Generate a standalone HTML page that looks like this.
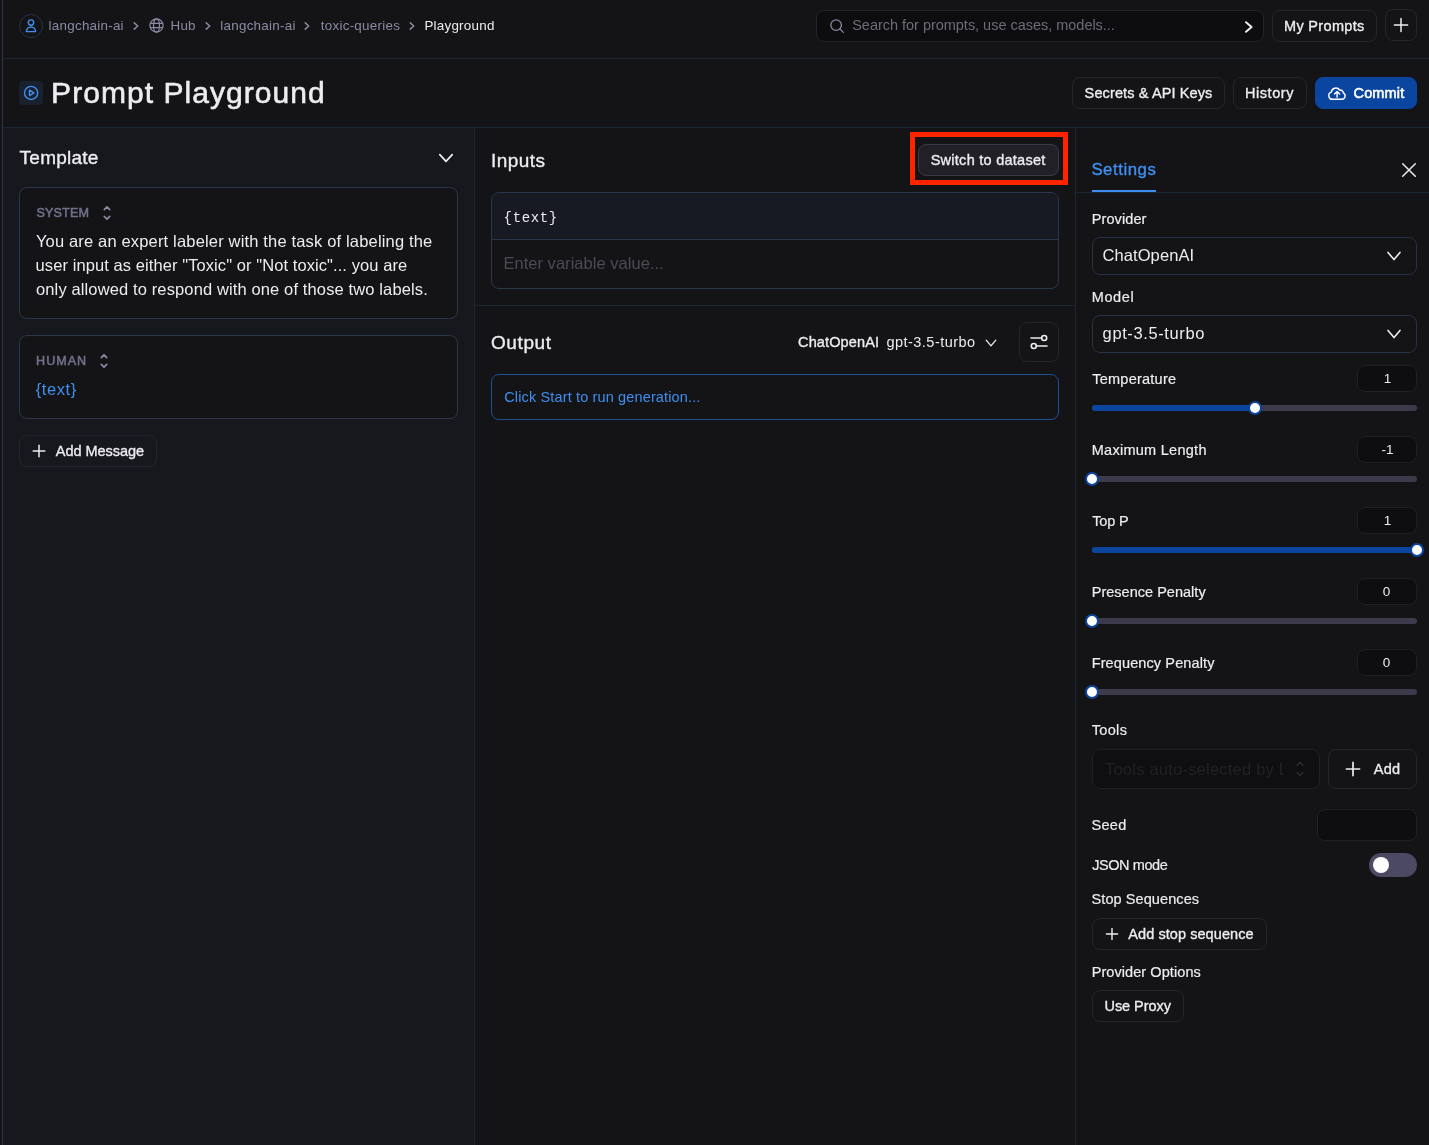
<!DOCTYPE html>
<html lang="en">
<head>
<meta charset="utf-8">
<title>Prompt Playground - LangSmith</title>
<style>
*{box-sizing:border-box;margin:0;padding:0}
html,body{width:1429px;height:1145px;overflow:hidden;background:#141416}
body{position:relative;font-family:"Liberation Sans",sans-serif;color:#ececf1}
.abs,.t,.ic,.box,.btn{position:absolute}
.t{white-space:nowrap;font-weight:400}
.t.m{-webkit-text-stroke:0.35px currentColor}
.t.l{-webkit-text-stroke:0.2px currentColor}
.t.s{-webkit-text-stroke:0.55px currentColor}
.t.b{font-weight:700}
.t.mono{font-family:"Liberation Mono",monospace}
body>*{will-change:transform}
.ic{overflow:visible}
.hl{position:absolute;height:1px;background:#1d2534}
.vl{position:absolute;width:1px;background:#1d2534}
.btn{border:1px solid #25252e;border-radius:8px;background:transparent;font:inherit;color:inherit;padding:0;text-align:left;overflow:visible}
.box{border:1px solid #2a374b;border-radius:8px}
.val{position:absolute;left:1357px;width:60px;height:27px;border:1px solid #1f1f27;border-radius:8px;background:#0e0e10}
.track{position:absolute;left:1092px;width:325px;height:6px;border-radius:3px;background:#3d3b4b}
.fill{position:absolute;left:0;top:0;height:6px;border-radius:3px;background:#0b449e}
.thumb{position:absolute;top:-4px;width:14px;height:14px;border-radius:50%;background:#fff;border:2px solid #0b449e;margin-left:-7px}
</style>
</head>
<body>

<div class="vl" style="left:2px;top:0;height:1145px;background:#2b3547"></div>
<header class="abs" style="left:3px;top:0;width:1426px;height:59px">
<nav aria-label="breadcrumb">
<svg class="ic" style="left:16px;top:14px" width="24" height="24" viewBox="0 0 24 24"><circle cx="12" cy="12" r="11.5" fill="none" stroke="#26344a" stroke-width="1"/><circle cx="12" cy="8.6" r="2.7" fill="none" stroke="#3f8ff0" stroke-width="1.4"/><path d="M7.4 17.6 a4.6 4.6 0 0 1 9.2 0 Z" fill="none" stroke="#3f8ff0" stroke-width="1.4" stroke-linejoin="round"/></svg>
<span id="bc1" class="t" style="left:45.6px;top:18px;line-height:15px;height:15px;font-size:13.4px;color:#8a8aa5;letter-spacing:0.254px;">langchain-ai</span>
<svg class="ic" style="left:126.6px;top:19.6px" width="12" height="12" viewBox="-6 -6 12 12"><path d="M-1.75 -3.15 L1.75 0 L-1.75 3.15" fill="none" stroke="#8a8aa5" stroke-width="1.5" stroke-linecap="round" stroke-linejoin="round"/></svg>
<svg class="ic" style="left:145.5px;top:18.3px" width="15" height="15" viewBox="0 0 15 15" fill="none" stroke="#8a8aa5" stroke-width="1.2"><circle cx="7.5" cy="7.5" r="6.6"/><ellipse cx="7.5" cy="7.5" rx="3" ry="6.6"/><path d="M1 5.3 H14 M1 9.7 H14"/></svg>
<span id="bc2" class="t" style="left:167.6px;top:18px;line-height:15px;height:15px;font-size:13.4px;color:#8a8aa5;letter-spacing:0.161px;">Hub</span>
<svg class="ic" style="left:199px;top:19.6px" width="12" height="12" viewBox="-6 -6 12 12"><path d="M-1.75 -3.15 L1.75 0 L-1.75 3.15" fill="none" stroke="#8a8aa5" stroke-width="1.5" stroke-linecap="round" stroke-linejoin="round"/></svg>
<span id="bc3" class="t" style="left:217.2px;top:18px;line-height:15px;height:15px;font-size:13.4px;color:#8a8aa5;letter-spacing:0.281px;">langchain-ai</span>
<svg class="ic" style="left:298.3px;top:19.6px" width="12" height="12" viewBox="-6 -6 12 12"><path d="M-1.75 -3.15 L1.75 0 L-1.75 3.15" fill="none" stroke="#8a8aa5" stroke-width="1.5" stroke-linecap="round" stroke-linejoin="round"/></svg>
<span id="bc4" class="t" style="left:317.8px;top:18px;line-height:15px;height:15px;font-size:13.4px;color:#8a8aa5;letter-spacing:0.260px;">toxic-queries</span>
<svg class="ic" style="left:403.4px;top:19.6px" width="12" height="12" viewBox="-6 -6 12 12"><path d="M-1.75 -3.15 L1.75 0 L-1.75 3.15" fill="none" stroke="#8a8aa5" stroke-width="1.5" stroke-linecap="round" stroke-linejoin="round"/></svg>
<span id="bc5" class="t" style="left:421.4px;top:18px;line-height:15px;height:15px;font-size:13.4px;color:#ececf1;letter-spacing:0.244px;">Playground</span>
</nav>
<div class="abs" role="search" style="left:813px;top:10px;width:448px;height:32px;border:1px solid #23232c;border-radius:8px;background:#0d0d0f">
<svg class="ic" style="left:13px;top:8px" width="15" height="15" viewBox="0 0 15 15" fill="none" stroke="#8a8aa5" stroke-width="1.3" stroke-linecap="round"><circle cx="6.1" cy="6.1" r="5.3"/><path d="M9.9 9.9 L13.4 13.4"/></svg>
<span id="srch" class="t" style="left:35.2px;top:6px;line-height:16px;height:16px;font-size:14.5px;color:#6c6c78;letter-spacing:-0.021px;">Search for prompts, use cases, models...</span>
<svg class="ic" style="left:425.5px;top:9px" width="12" height="14" viewBox="-6 -7 12 14"><path d="M-3 -4.8 L2.6 0 L-3 4.8" fill="none" stroke="#ececf1" stroke-width="2" stroke-linecap="round" stroke-linejoin="round"/></svg>
</div>
<button class="btn" style="left:1269px;top:10px;width:105px;height:32px"><span id="myp" class="t m" style="left:11.00px;top:7.00px;line-height:16px;height:16px;font-size:14.5px;color:#ececf1;letter-spacing:0.333px;">My Prompts</span></button>
<button class="btn" style="left:1382px;top:9px;width:32px;height:32px" aria-label="New"><svg class="ic" style="left:5.00px;top:5.00px" width="20" height="20" viewBox="-10 -10 20 20"><path d="M-6.6 0 H6.6 M0 -6.6 V6.6" fill="none" stroke="#ececf1" stroke-width="1.5" stroke-linecap="round"/></svg></button>
</header>
<div class="hl" style="left:3px;top:58px;width:1426px"></div>
<section class="abs" style="left:3px;top:59px;width:1426px;height:69px">
<div class="abs" style="left:16px;top:22px;width:24px;height:24px;border-radius:4px;background:#19212e"></div>
<svg class="ic" style="left:20px;top:26px" width="16" height="16" viewBox="0 0 16 16" fill="none" stroke="#3f8ff0" stroke-width="1.35" stroke-linejoin="round"><circle cx="8.1" cy="7.9" r="6.6"/><path d="M6.5 5.1 L10.9 7.9 L6.5 10.7 Z"/></svg>
<h1><span id="title" class="t s" style="left:48.1px;top:17px;line-height:33px;height:33px;font-size:30px;color:#ececf1;letter-spacing:1.044px;-webkit-text-stroke-width:0.6px;">Prompt Playground</span></h1>
<button class="btn" style="left:1069px;top:18px;width:153px;height:32px"><span id="sec" class="t m" style="left:11.60px;top:7.00px;line-height:16px;height:16px;font-size:14.5px;color:#ececf1;letter-spacing:0.121px;">Secrets &amp; API Keys</span></button>
<button class="btn" style="left:1230px;top:18px;width:74px;height:32px"><span id="hist" class="t m" style="left:11.00px;top:7.00px;line-height:16px;height:16px;font-size:14.5px;color:#ececf1;letter-spacing:0.549px;">History</span></button>
<button class="btn" style="left:1312px;top:18px;width:102px;height:32px;background:#0a45a0;border-color:#0a45a0"><svg class="ic" style="left:12.00px;top:8.00px" width="18" height="14" viewBox="0 0 18 14" fill="none" stroke="#ffffff" stroke-width="1.4" stroke-linecap="round" stroke-linejoin="round"><path d="M4.6 13.3 H13.9 A3.4 3.4 0 0 0 15.3 6.9 A3.3 3.3 0 0 0 11.6 4 A4.6 4.6 0 0 0 3.3 6.1 A3.7 3.7 0 0 0 4.6 13.3 Z"/><path d="M9.1 11.3 V5.5 M6.5 8 L9.1 5.4 L11.7 8"/></svg><span id="commit" class="t s" style="left:37.50px;top:7.00px;line-height:16px;height:16px;font-size:14.5px;color:#ffffff;letter-spacing:0.165px;">Commit</span></button>
</section>
<div class="hl" style="left:3px;top:127px;width:1426px"></div>
<section class="abs" style="left:3px;top:128px;width:471px;height:1017px;background:#17181d">
<h2><span id="tmpl" class="t m" style="left:16.6px;top:19px;line-height:21px;height:21px;font-size:19px;color:#ececf1;letter-spacing:0.235px;">Template</span></h2>
<svg class="ic" style="left:433px;top:20px" width="20" height="20" viewBox="-10 -10 20 20"><path d="M-6.2 -3.4 L0 3.4 L6.2 -3.4" fill="none" stroke="#ececf1" stroke-width="1.7" stroke-linecap="round" stroke-linejoin="round"/></svg>
<div class="box" style="left:16px;top:59px;width:439px;height:132px;background:#141416"><span id="sys" class="t s" style="left:16.40px;top:18.00px;line-height:14px;height:14px;font-size:12.6px;color:#70708a;letter-spacing:0.164px;">SYSTEM</span><svg class="ic" style="left:78.80px;top:15.00px" width="16" height="20" viewBox="-8 -10 16 20"><path d="M-2.7 -3.4 L0 -6.1 L2.7 -3.4 M-2.7 3.4 L0 6.1 L2.7 3.4" fill="none" stroke="#8a8aa5" stroke-width="1.7" stroke-linecap="round" stroke-linejoin="round"/></svg><span id="l1" class="t" style="left:15.90px;top:44.00px;line-height:18px;height:18px;font-size:16.5px;color:#ececf1;letter-spacing:0.166px;">You are an expert labeler with the task of labeling the</span><span id="l2" class="t" style="left:15.60px;top:68.00px;line-height:18px;height:18px;font-size:16.5px;color:#ececf1;letter-spacing:0.081px;">user input as either "Toxic" or "Not toxic"... you are</span><span id="l3" class="t" style="left:16.00px;top:92.00px;line-height:18px;height:18px;font-size:16.5px;color:#ececf1;letter-spacing:0.125px;">only allowed to respond with one of those two labels.</span></div>
<div class="box" style="left:16px;top:207px;width:439px;height:84px;background:#141416"><span id="hum" class="t s" style="left:16.10px;top:18.00px;line-height:14px;height:14px;font-size:12.6px;color:#70708a;letter-spacing:0.970px;">HUMAN</span><svg class="ic" style="left:76.00px;top:15.30px" width="16" height="20" viewBox="-8 -10 16 20"><path d="M-2.7 -3.4 L0 -6.1 L2.7 -3.4 M-2.7 3.4 L0 6.1 L2.7 3.4" fill="none" stroke="#8a8aa5" stroke-width="1.7" stroke-linecap="round" stroke-linejoin="round"/></svg><span id="htext" class="t" style="left:15.70px;top:44.00px;line-height:18px;height:18px;font-size:16.5px;color:#3f8ff0;letter-spacing:0.595px;">{text}</span></div>
<button class="btn" style="left:16px;top:307px;width:138px;height:32px"><svg class="ic" style="left:9.00px;top:5.00px" width="20" height="20" viewBox="-10 -10 20 20"><path d="M-5.8 0 H5.8 M0 -5.8 V5.8" fill="none" stroke="#ececf1" stroke-width="1.5" stroke-linecap="round"/></svg><span id="addm" class="t m" style="left:35.80px;top:7.00px;line-height:16px;height:16px;font-size:14.5px;color:#ececf1;letter-spacing:-0.043px;">Add Message</span></button>
</section>
<div class="vl" style="left:474px;top:128px;height:1017px"></div>
<main class="abs" style="left:475px;top:128px;width:600px;height:1017px">
<h2><span id="inp" class="t m" style="left:15.9px;top:22px;line-height:21px;height:21px;font-size:19px;color:#ececf1;letter-spacing:0.485px;">Inputs</span></h2>
<div class="abs" style="left:435px;top:4px;width:158px;height:53px;border:5px solid #ff2300"></div>
<button class="btn" style="left:443px;top:16px;width:141px;height:32px;background:#202026;border-color:#3a3a48"><span id="sw" class="t m" style="left:11.70px;top:7.00px;line-height:16px;height:16px;font-size:14.5px;color:#ececf1;letter-spacing:0.260px;">Switch to dataset</span></button>
<div class="box" style="left:16px;top:64px;width:568px;height:97px;overflow:hidden;background:#141416"><div style="height:47px;background:#181a23;border-bottom:1px solid #2a374b"></div><span id="vtext" class="t mono" style="left:11.60px;top:17.00px;line-height:16px;height:16px;font-size:14px;color:#ececf1;letter-spacing:0.645px;">{text}</span><span id="ph" class="t" style="left:11.40px;top:61.00px;line-height:18px;height:18px;font-size:16.5px;color:#4a4b59;letter-spacing:0.033px;">Enter variable value...</span></div>
<div class="hl" style="left:0;top:177px;width:600px"></div>
<h2><span id="outp" class="t m" style="left:16.0px;top:204px;line-height:21px;height:21px;font-size:19px;color:#ececf1;letter-spacing:0.595px;">Output</span></h2>
<span id="coai" class="t m" style="left:323.1px;top:206px;line-height:16px;height:16px;font-size:14.5px;color:#ececf1;letter-spacing:0.119px;">ChatOpenAI</span>
<span id="gpt" class="t" style="left:411.4px;top:206px;line-height:16px;height:16px;font-size:14.5px;color:#ececf1;letter-spacing:0.478px;">gpt-3.5-turbo</span>
<svg class="ic" style="left:506px;top:205px" width="20" height="20" viewBox="-10 -10 20 20"><path d="M-4.8 -2.8 L0 2.8 L4.8 -2.8" fill="none" stroke="#ececf1" stroke-width="1.3" stroke-linecap="round" stroke-linejoin="round"/></svg>
<button class="btn" style="left:544px;top:194px;width:40px;height:40px" aria-label="Settings"><svg class="ic" style="left:10.00px;top:11.00px" width="18" height="16" viewBox="0 0 18 16" fill="none" stroke="#ececf1" stroke-width="1.6" stroke-linecap="round"><path d="M1 4 H11.6"/><circle cx="14.2" cy="4" r="2.5"/><path d="M6.4 12 H17"/><circle cx="3.8" cy="12" r="2.5"/></svg></button>
<div class="box" style="left:16px;top:246px;width:568px;height:46px;border-color:#1d4f96;background:#141416"><span id="click" class="t" style="left:12.20px;top:14.00px;line-height:16px;height:16px;font-size:14.5px;color:#3f8ff0;letter-spacing:0.141px;">Click Start to run generation...</span></div>
</main>
<div class="vl" style="left:1075px;top:128px;height:1017px"></div>
<aside class="abs" style="left:1076px;top:128px;width:353px;height:1017px">
<span id="sett" class="t m" style="left:15.4px;top:32px;line-height:19px;height:19px;font-size:16.8px;color:#3f8ff0;letter-spacing:0.539px;">Settings</span>
<div class="abs" style="left:16px;top:62px;width:64px;height:3px;background:#3f8ff0"></div>
<div class="hl" style="left:0;top:64px;width:353px"></div>
<svg class="ic" style="left:323px;top:32px" width="20" height="20" viewBox="-10 -10 20 20"><path d="M-6.3 -6.3 L6.3 6.3 M6.3 -6.3 L-6.3 6.3" stroke="#ececf1" stroke-width="1.5" stroke-linecap="round"/></svg>
<span id="prov" class="t l" style="left:15.7px;top:83px;line-height:16px;height:16px;font-size:14.5px;color:#ececf1;letter-spacing:0.098px;">Provider</span>
<div class="box" style="left:16px;top:109px;width:325px;height:38px;border-color:#263247"><span id="selp" class="t" style="left:9.50px;top:8.00px;line-height:18px;height:18px;font-size:16.5px;color:#ececf1;letter-spacing:0.086px;">ChatOpenAI</span><svg class="ic" style="left:291.00px;top:8.00px" width="20" height="20" viewBox="-10 -10 20 20"><path d="M-6 -3.6 L0 3.6 L6 -3.6" fill="none" stroke="#ececf1" stroke-width="1.6" stroke-linecap="round" stroke-linejoin="round"/></svg></div>
<span id="model" class="t l" style="left:15.7px;top:161px;line-height:16px;height:16px;font-size:14.5px;color:#ececf1;letter-spacing:0.611px;">Model</span>
<div class="box" style="left:16px;top:187px;width:325px;height:38px;border-color:#263247"><span id="selm" class="t" style="left:9.60px;top:8.00px;line-height:18px;height:18px;font-size:16.5px;color:#ececf1;letter-spacing:0.613px;">gpt-3.5-turbo</span><svg class="ic" style="left:291.00px;top:8.00px" width="20" height="20" viewBox="-10 -10 20 20"><path d="M-6 -3.6 L0 3.6 L6 -3.6" fill="none" stroke="#ececf1" stroke-width="1.6" stroke-linecap="round" stroke-linejoin="round"/></svg></div>
<span id="temp" class="t l" style="left:16.2px;top:243px;line-height:16px;height:16px;font-size:14.5px;color:#ececf1;letter-spacing:0.247px;">Temperature</span>
<div class="val" style="left:281px;top:237px"><span id="tempv" class="t" style="left:25.80px;top:5.00px;line-height:15px;height:15px;font-size:13.5px;color:#ececf1;letter-spacing:0.000px;">1</span></div>
<div class="track" style="left:16px;top:277px"><div class="fill" style="width:163px"></div><div class="thumb" style="left:163px"></div></div>
<span id="maxl" class="t l" style="left:15.7px;top:314px;line-height:16px;height:16px;font-size:14.5px;color:#ececf1;letter-spacing:0.274px;">Maximum Length</span>
<div class="val" style="left:281px;top:308px"><span id="maxlv" class="t" style="left:23.50px;top:5.00px;line-height:15px;height:15px;font-size:13.5px;color:#ececf1;letter-spacing:0.000px;">-1</span></div>
<div class="track" style="left:16px;top:348px"><div class="fill" style="width:0px"></div><div class="thumb" style="left:0px"></div></div>
<span id="topp" class="t l" style="left:16.2px;top:385px;line-height:16px;height:16px;font-size:14.5px;color:#ececf1;letter-spacing:-0.165px;">Top P</span>
<div class="val" style="left:281px;top:379px"><span id="toppv" class="t" style="left:25.80px;top:5.00px;line-height:15px;height:15px;font-size:13.5px;color:#ececf1;letter-spacing:0.000px;">1</span></div>
<div class="track" style="left:16px;top:419px"><div class="fill" style="width:325px"></div><div class="thumb" style="left:325px"></div></div>
<span id="pres" class="t l" style="left:15.7px;top:456px;line-height:16px;height:16px;font-size:14.5px;color:#ececf1;letter-spacing:0.022px;">Presence Penalty</span>
<div class="val" style="left:281px;top:450px"><span id="presv" class="t" style="left:24.80px;top:5.00px;line-height:15px;height:15px;font-size:13.5px;color:#ececf1;letter-spacing:0.000px;">0</span></div>
<div class="track" style="left:16px;top:490px"><div class="fill" style="width:0px"></div><div class="thumb" style="left:0px"></div></div>
<span id="freq" class="t l" style="left:15.7px;top:527px;line-height:16px;height:16px;font-size:14.5px;color:#ececf1;letter-spacing:0.112px;">Frequency Penalty</span>
<div class="val" style="left:281px;top:521px"><span id="freqv" class="t" style="left:24.80px;top:5.00px;line-height:15px;height:15px;font-size:13.5px;color:#ececf1;letter-spacing:0.000px;">0</span></div>
<div class="track" style="left:16px;top:561px"><div class="fill" style="width:0px"></div><div class="thumb" style="left:0px"></div></div>
<span id="tools" class="t l" style="left:15.8px;top:594px;line-height:16px;height:16px;font-size:14.5px;color:#ececf1;letter-spacing:0.311px;">Tools</span>
<div class="box" style="left:16px;top:621px;width:228px;height:40px;background:#0f0f11;border-color:#202029"><span id="toolsel" class="t" style="left:12.00px;top:10.00px;line-height:18px;height:18px;font-size:16.5px;color:#212127;letter-spacing:0.220px;">Tools auto-selected by L</span><div class="abs mask" style="left:189.50px;top:3.00px;width:8px;height:32px;background:#0f0f11"></div><svg class="ic" style="left:199.00px;top:9.00px" width="16" height="20" viewBox="-8 -10 16 20"><path d="M-3 -3.6 L0 -6.800000000000001 L3 -3.6 M-3 3.6 L0 6.800000000000001 L3 3.6" fill="none" stroke="#2a2a33" stroke-width="1.5" stroke-linecap="round" stroke-linejoin="round"/></svg></div>
<button class="btn" style="left:252px;top:621px;width:89px;height:40px"><svg class="ic" style="left:14.00px;top:9.00px" width="20" height="20" viewBox="-10 -10 20 20"><path d="M-6.6 0 H6.6 M0 -6.6 V6.6" fill="none" stroke="#ececf1" stroke-width="1.7" stroke-linecap="round"/></svg><span id="add" class="t m" style="left:44.70px;top:11.00px;line-height:16px;height:16px;font-size:14.5px;color:#ececf1;letter-spacing:0.275px;">Add</span></button>
<span id="seed" class="t l" style="left:15.4px;top:689px;line-height:16px;height:16px;font-size:14.5px;color:#ececf1;letter-spacing:0.316px;">Seed</span>
<div class="box" style="left:241px;top:681px;width:100px;height:32px;background:#0e0e10;border-color:#202029"></div>
<span id="json" class="t l" style="left:16.2px;top:729px;line-height:16px;height:16px;font-size:14.5px;color:#ececf1;letter-spacing:-0.428px;">JSON mode</span>
<div class="abs" role="switch" style="left:293px;top:725px;width:48px;height:24px;border-radius:12px;background:#4b4a62"><div style="position:absolute;left:4px;top:4px;width:16px;height:16px;border-radius:50%;background:#fff"></div></div>
<span id="stop" class="t l" style="left:15.5px;top:763px;line-height:16px;height:16px;font-size:14.5px;color:#ececf1;letter-spacing:0.088px;">Stop Sequences</span>
<button class="btn" style="left:16px;top:790px;width:175px;height:32px"><svg class="ic" style="left:9.00px;top:5.00px" width="20" height="20" viewBox="-10 -10 20 20"><path d="M-5.6 0 H5.6 M0 -5.6 V5.6" fill="none" stroke="#ececf1" stroke-width="1.4" stroke-linecap="round"/></svg><span id="addstop" class="t m" style="left:35.30px;top:7.00px;line-height:16px;height:16px;font-size:14.5px;color:#ececf1;letter-spacing:0.068px;">Add stop sequence</span></button>
<span id="popt" class="t l" style="left:15.7px;top:836px;line-height:16px;height:16px;font-size:14.5px;color:#ececf1;letter-spacing:0.074px;">Provider Options</span>
<button class="btn" style="left:16px;top:862px;width:92px;height:32px"><span id="proxy" class="t m" style="left:11.50px;top:7.00px;line-height:16px;height:16px;font-size:14.5px;color:#ececf1;letter-spacing:-0.055px;">Use Proxy</span></button>
</aside>
</body>
</html>
